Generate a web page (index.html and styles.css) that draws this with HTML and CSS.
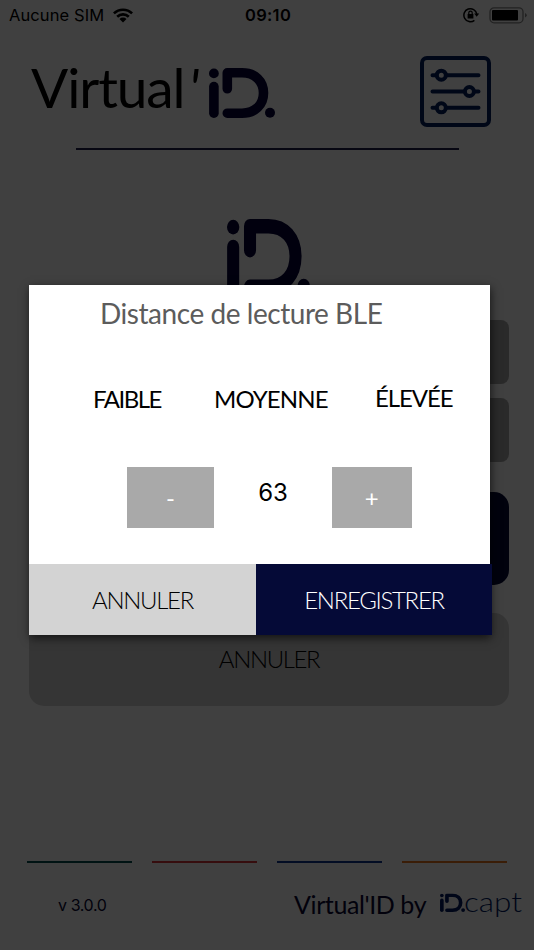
FILE: index.html
```html
<!DOCTYPE html>
<html lang="fr">
<head>
    <meta charset="UTF-8">
    <meta name="viewport" content="width=device-width, initial-scale=1.0">
    <title>Virtual'ID</title>
    <link rel="stylesheet" href="styles.css">
</head>
<body>
    <svg class="symbols" width="0" height="0">
        <symbol id="logo" viewBox="0 0 66 50" preserveAspectRatio="none">
            <g fill="none" stroke="currentColor" stroke-width="9.600" stroke-linecap="round" stroke-linejoin="round">
                <path d="M4.900 18.600V45.200"/>
                <path d="M18.300 20.800V4.800H33C46 4.800 54.500 13 54.500 25S46 45.200 33 45.200H18.300"/>
            </g>
            <circle cx="4.900" cy="5.400" r="4.900" fill="currentColor"/>
            <circle cx="61" cy="44.800" r="5" fill="currentColor"/>
        </symbol>
    </svg>

    <div class="page">
        <div class="status">
            <span class="carrier">Aucune SIM</span>
            <svg class="wifi" width="20" height="15" viewBox="0 0 20 15">
                <g fill="none" stroke="#000" stroke-width="2.600">
                    <path d="M.9 5.400a13 13 0 0 1 18.200 0"/>
                    <path d="M4.200 8.700a8.300 8.300 0 0 1 11.600 0"/>
                </g>
                <path d="M6.500 11a5 5 0 0 1 7 0L10 14.600z"/>
            </svg>
            <span class="time">09:10</span>
            <svg class="lock" width="17" height="16" viewBox="0 0 17 16">
                <path d="M11.400 13.300A6.500 6.500 0 1 1 13.800 7" fill="none" stroke="#000" stroke-width="1.500"/>
                <path d="M11.200 6.500h5L13.700 9.700z"/>
                <path d="M4.600 7h5.800v4.500H4.600z"/>
                <path d="M5.800 7.500V5.800a1.700 1.700 0 0 1 3.400 0v1.700" fill="none" stroke="#000" stroke-width="1.200"/>
            </svg>
            <svg class="battery" width="39" height="17" viewBox="0 0 39 17">
                <rect x="1" y=".8" width="33" height="15" rx="4" fill="none" stroke="#888" stroke-width="1.300"/>
                <rect x="3" y="3" width="26" height="10.600" rx="1"/>
                <path d="M36 6v4.500q1.800-.8 1.800-2.200T36 6z" fill="#888"/>
            </svg>
        </div>

        <div class="header">
            <h1>Virtual<span class="quote">'</span></h1>
            <svg class="logo-small"><use href="#logo"/></svg>
            <svg class="settings" width="71" height="71" viewBox="0 0 71 71" fill="none" stroke="#001c5c">
                <rect x="2" y="2" width="67" height="67" rx="5" stroke-width="4"/>
                <g stroke-width="4" stroke-linecap="round">
                    <path d="M12.500 19.200h4M27 19.200h31.500M12.500 35.500h32M55 35.500h3.500M12.500 51.800h4M27 51.800h31.500"/>
                    <circle cx="21.300" cy="19.200" r="4.500"/>
                    <circle cx="49.400" cy="35.500" r="4.500"/>
                    <circle cx="21.300" cy="51.800" r="4.500"/>
                </g>
            </svg>
        </div>
        <div class="rule"></div>

        <svg class="logo-big"><use href="#logo"/></svg>

        <div class="choices">
            <div class="choice"></div>
            <div class="choice"></div>
            <div class="choice primary"></div>
            <div class="choice cancel">ANNULER</div>
        </div>

        <div class="lines">
            <span class="green"></span>
            <span class="red"></span>
            <span class="blue"></span>
            <span class="orange"></span>
        </div>
        <div class="footer">
            <span class="version">v 3.0.0</span>
            <span class="by">Virtual'ID by</span>
            <svg class="brand" width="90" height="46" viewBox="0 0 90 46">
                <use href="#logo" x="1" y="13.500" width="25" height="18.500"/>
                <text x="25" y="32" textLength="58" lengthAdjust="spacingAndGlyphs">capt</text>
            </svg>
        </div>
    </div>

    <div class="overlay">
        <div class="dialog">
            <h2>Distance de lecture BLE</h2>
            <div class="levels">
                <span class="low">FAIBLE</span>
                <span class="medium">MOYENNE</span>
                <span class="high">ÉLEVÉE</span>
            </div>
            <div class="stepper">
                <button class="minus">-</button>
                <span class="value">63</span>
                <button class="plus">+</button>
            </div>
            <div class="actions">
                <button class="dismiss">ANNULER</button>
                <button class="save">ENREGISTRER</button>
            </div>
        </div>
    </div>
</body>
</html>
```
FILE: styles.css
```css
* {
    box-sizing: border-box;
}
body {
    margin: 0;
    width: 534px;
    height: 950px;
    overflow: hidden;
    background: #fff;
    font-family: Lato, sans-serif;
    position: relative;
}
.symbols {
    display: none;
}
.page {
    display: flex;
    flex-direction: column;
    height: 950px;
}
.status {
    display: flex;
    align-items: center;
    height: 30px;
    padding-left: 9px;
    font: 16.5px/30px Inter, sans-serif;
}
.carrier {
    width: 104px;
    letter-spacing: 0.1px;
    white-space: nowrap;
}
.time {
    width: 50px;
    margin-left: 112px;
    font-weight: 600;
    letter-spacing: 0.3px;
}
.lock {
    margin-left: 168px;
}
.battery {
    margin-left: 9px;
}
.header {
    display: flex;
    height: 118px;
    padding: 26px 0 0 31px;
}
h1 {
    width: 178px;
    margin: 0;
    font-size: 55px;
    font-weight: 400;
    line-height: 63px;
    letter-spacing: -1.1px;
    white-space: nowrap;
}
.quote {
    margin-left: 4px;
    font-style: italic;
}
.logo-small {
    width: 66px;
    height: 50px;
    margin-top: 12px;
    color: #040238;
}
.settings {
    margin-left: 145px;
}
.rule {
    flex: none;
    width: 383px;
    height: 2px;
    margin-left: 76px;
    background: #1e1c48;
}
.logo-big {
    flex: none;
    width: 83px;
    height: 75px;
    margin: 69px 0 0 227px;
    color: #040238;
}
.choices {
    display: flex;
    flex-direction: column;
    width: 480px;
    margin: 26px 0 0 29px;
}
.choice {
    height: 64px;
    margin-bottom: 14px;
    border-radius: 8px;
    background: #a9a9a9;
}
.primary {
    height: 93px;
    margin: 16px 0 28px;
    border-radius: 15px;
    background: #050a37;
}
.cancel {
    height: 93px;
    margin: 0;
    border-radius: 15px;
    background: #d3d3d3;
    font-size: 24px;
    font-weight: 300;
    line-height: 92px;
    letter-spacing: -1.4px;
    text-align: center;
}
.lines {
    display: flex;
    gap: 20.5px;
    margin: 155px 0 0 27px;
}
.lines span {
    width: 104.5px;
    height: 2px;
}
.green {
    background: #004c4c;
}
.red {
    background: #d63638;
}
.blue {
    background: #0d348f;
}
.orange {
    background: #e5761c;
}
.footer {
    display: flex;
    height: 60px;
    padding-left: 58px;
    margin-top: 12px;
    line-height: 59px;
    color: #080632;
}
.version {
    width: 236px;
    font: 16px/60px Inter, sans-serif;
    letter-spacing: -0.4px;
}
.by {
    width: 145px;
    font-size: 25px;
    letter-spacing: -0.4px;
    white-space: nowrap;
}
.brand {
    flex: none;
    margin-top: 5px;
    color: #00195f;
    fill: #00195f;
    font-size: 27px;
    font-weight: 300;
}

/* modal */
.overlay {
    position: absolute;
    inset: 0;
    padding: 285px 0 0 29px;
    background: rgba(0, 0, 0, 0.75);
}
.dialog {
    display: flex;
    flex-direction: column;
    width: 461px;
    height: 350px;
    background: #fff;
    box-shadow: 1px 3px 9px rgba(0, 0, 0, 0.65);
}
h2 {
    margin: 0 0 0 71px;
    font-size: 28px;
    font-weight: 400;
    line-height: 56px;
    letter-spacing: -0.45px;
    white-space: nowrap;
    color: #5c5c5c;
}
.levels {
    display: flex;
    height: 50px;
    margin-top: 33px;
    padding-left: 64px;
    font-size: 24px;
    line-height: 50px;
}
.low {
    width: 121px;
    letter-spacing: -1.5px;
}
.medium {
    width: 161px;
    letter-spacing: -0.9px;
}
.high {
    line-height: 47px;
    letter-spacing: -1.1px;
}
.stepper {
    display: flex;
    height: 61px;
    margin-top: 43px;
    padding-left: 98px;
}
button {
    border: none;
    padding: 0;
    font-family: Lato, sans-serif;
    font-size: 24px;
}
.minus {
    width: 87px;
    background: #a9a9a9;
    color: #fff;
}
.plus {
    width: 79.5px;
    background: #a9a9a9;
    color: #fff;
}
.value {
    width: 118px;
    font: 24px/51px Inter, sans-serif;
    text-align: center;
}
.actions {
    display: flex;
    width: 463px;
    height: 71px;
    margin-top: 36px;
}
.actions button {
    font-weight: 300;
    letter-spacing: -1.3px;
}
.dismiss {
    width: 227px;
    background: #d3d3d3;
    color: #000;
}
.save {
    width: 236px;
    background: #050a37;
    color: #fff;
}
```
